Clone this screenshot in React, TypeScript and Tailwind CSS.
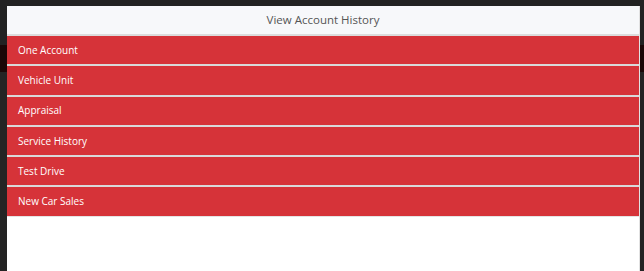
const items = [
  "One Account",
  "Vehicle Unit",
  "Appraisal",
  "Service History",
  "Test Drive",
  "New Car Sales",
];

export default function App() {
  return (
    <div className="relative w-[644px] h-[271px] overflow-hidden bg-[#222222] font-['Open_Sans','Liberation_Sans',sans-serif]">
      {/* page behind the overlay */}
      <div className="flex flex-col">
        <div className="h-[45px] bg-[#222222]" />
        <div className="h-[27px] bg-[#1b0707]" />
        <div className="h-[199px] bg-[#242424]" />
      </div>

      {/* modal */}
      <div className="absolute left-[7px] top-[6px] w-[633px] h-[265px] bg-white border-r border-[#e2e2e2] flex flex-col">
        <div className="h-[30px] bg-[#f7f8fa] border-b-2 border-[#dcdcdc] flex items-center justify-center">
          <span className="text-[11.5px] text-[#555]">View Account History</span>
        </div>
        <div className="flex flex-col gap-[2px] bg-[#d9d9d9] border-b border-[#e4e4e4]">
          {items.map((t) => (
            <div key={t} className="h-[28.3px] bg-[#d63339] flex items-center pl-[11px] text-[10px] text-white">
              {t}
            </div>
          ))}
        </div>
      </div>
    </div>
  );
}
